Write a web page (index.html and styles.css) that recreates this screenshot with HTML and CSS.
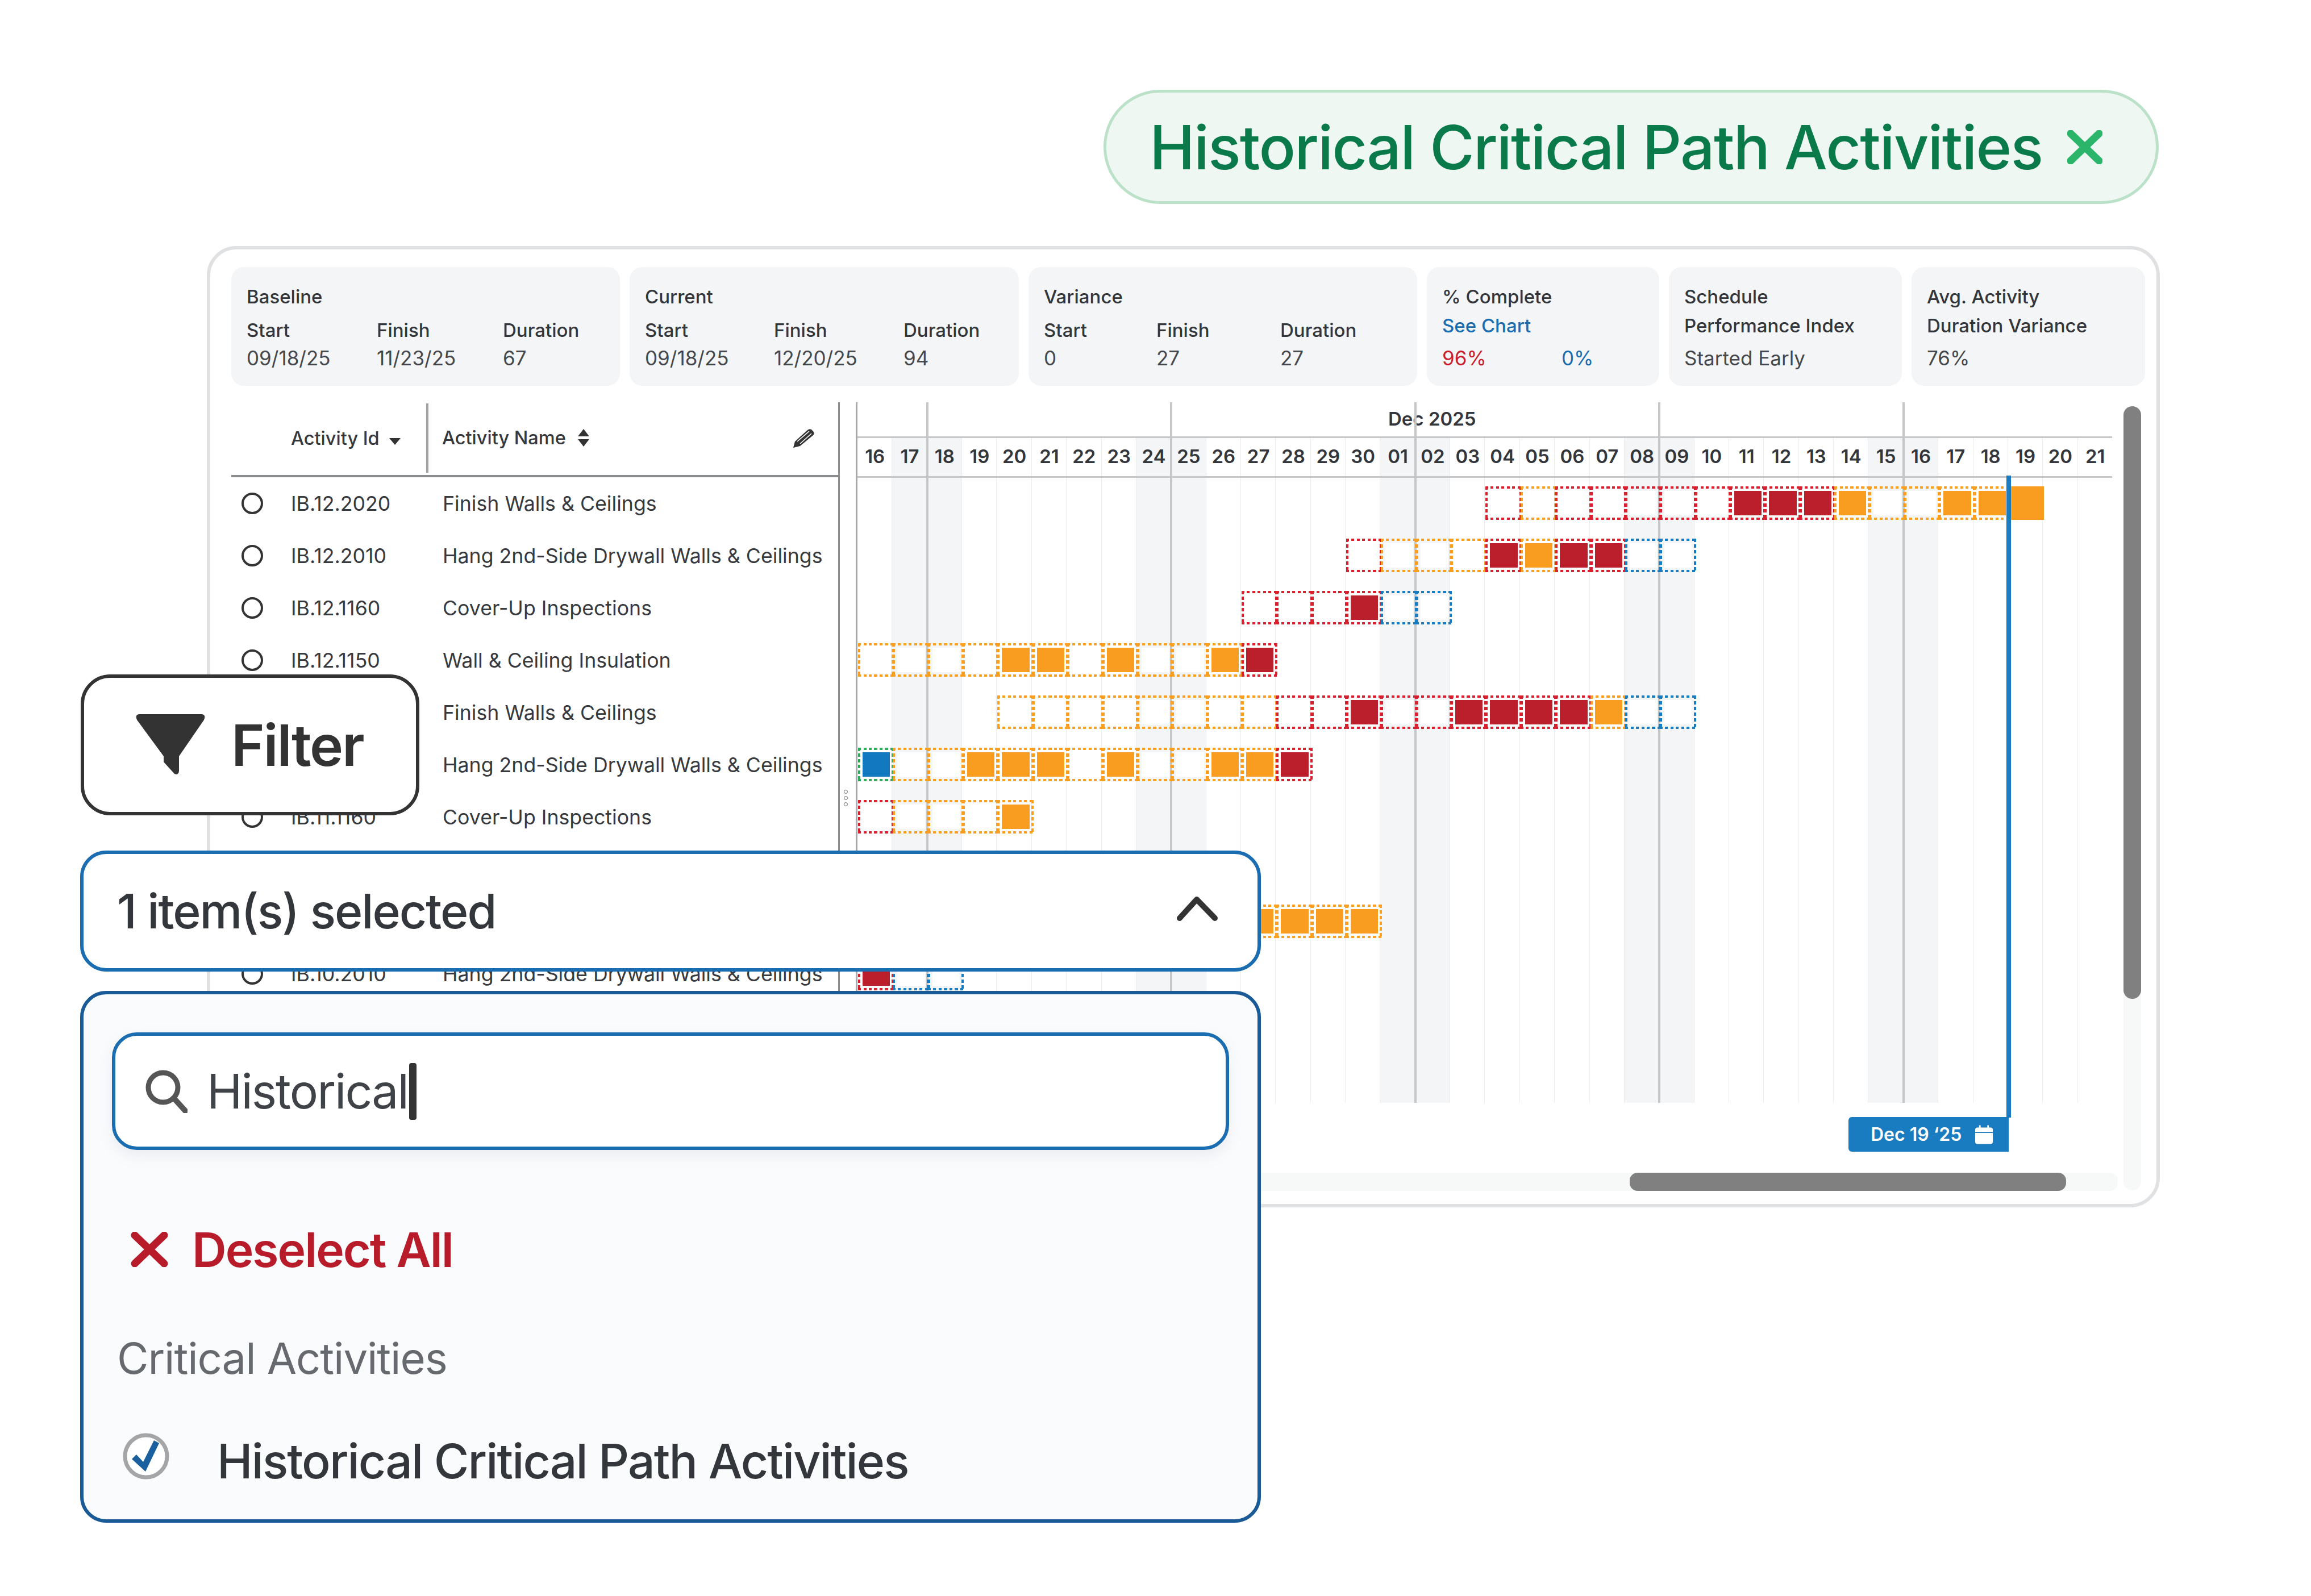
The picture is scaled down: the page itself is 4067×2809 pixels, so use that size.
FILE: index.html
```html
<!DOCTYPE html>
<html lang="en">
<head>
<meta charset="utf-8">
<title>Historical Critical Path Activities</title>
<link rel="stylesheet" href="styles.css">
</head>
<body>
<div class="canvas">
  <div class="pill">
    <span>Historical Critical Path Activities</span>
    <svg class="pill-x" viewBox="0 0 62 60"><path d="M6 6 56 54M56 6 6 54" fill="none" stroke="#2bb56b" stroke-width="13" stroke-linecap="round"/></svg>
  </div>

  <section class="card">
    <div class="summary">
      <div class="box">
        <div class="title">Baseline</div>
        <div class="triple t-a"><b>Start</b><b>Finish</b><b>Duration</b><span>09/18/25</span><span>11/23/25</span><span>67</span></div>
      </div>
      <div class="box">
        <div class="title">Current</div>
        <div class="triple t-b"><b>Start</b><b>Finish</b><b>Duration</b><span>09/18/25</span><span>12/20/25</span><span>94</span></div>
      </div>
      <div class="box">
        <div class="title">Variance</div>
        <div class="triple t-c"><b>Start</b><b>Finish</b><b>Duration</b><span>0</span><span>27</span><span>27</span></div>
      </div>
      <div class="box">
        <div class="title">% Complete</div>
        <div class="second link">See Chart</div>
        <div class="value pair"><span class="red">96%</span><span class="blue">0%</span></div>
      </div>
      <div class="box">
        <div class="title">Schedule</div>
        <div class="second">Performance Index</div>
        <div class="value">Started Early</div>
      </div>
      <div class="box">
        <div class="title">Avg. Activity</div>
        <div class="second">Duration Variance</div>
        <div class="value">76%</div>
      </div>
    </div>

    <div class="main">
      <div class="table">
        <div class="thead">
          <div class="th-id">Activity Id <svg class="caret" viewBox="0 0 22 14"><path d="M1 1H21L11 13Z" fill="#333"/></svg></div>
          <div class="th-name">Activity Name
            <svg class="sort" viewBox="0 0 22 32"><path d="M11 0 21 13H1ZM1 18H21L11 31Z" fill="#333"/></svg>
            <svg class="pencil" viewBox="0 0 37 34"><path d="M0 34 3 23 25 3Q28 0 32 2L35 5Q38 9 35 12L12 31Z" fill="#333"/><path d="M7 23 28 5M12 27 32 9" stroke="#fff" stroke-width="1.6"/></svg>
          </div>
        </div>
        <div class="tr"><i class="radio"></i><span class="id">IB.12.2020</span><span>Finish Walls &amp; Ceilings</span></div>
        <div class="tr"><i class="radio"></i><span class="id">IB.12.2010</span><span>Hang 2nd-Side Drywall Walls &amp; Ceilings</span></div>
        <div class="tr"><i class="radio"></i><span class="id">IB.12.1160</span><span>Cover-Up Inspections</span></div>
        <div class="tr"><i class="radio"></i><span class="id">IB.12.1150</span><span>Wall &amp; Ceiling Insulation</span></div>
        <div class="tr"><i class="radio"></i><span class="id">IB.11.2020</span><span>Finish Walls &amp; Ceilings</span></div>
        <div class="tr"><i class="radio"></i><span class="id">IB.11.2010</span><span>Hang 2nd-Side Drywall Walls &amp; Ceilings</span></div>
        <div class="tr"><i class="radio"></i><span class="id">IB.11.1160</span><span>Cover-Up Inspections</span></div>
        <div class="tr"><i class="radio"></i><span class="id">IB.11.1150</span><span>Wall &amp; Ceiling Insulation</span></div>
        <div class="tr"><i class="radio"></i><span class="id">IB.10.2020</span><span>Finish Walls &amp; Ceilings</span></div>
        <div class="tr"><i class="radio"></i><span class="id">IB.10.2010</span><span>Hang 2nd-Side Drywall Walls &amp; Ceilings</span></div>
      </div>
      <div class="sash"><i></i><i></i><i></i></div>

      <div class="gantt">
        <div class="month"><span>Dec 2025</span></div>
        <div class="area">
          <div class="days">
            <span>16</span><span>17</span><span>18</span><span>19</span><span>20</span><span>21</span><span>22</span><span>23</span><span>24</span><span>25</span><span>26</span><span>27</span><span>28</span><span>29</span><span>30</span><span>01</span><span>02</span><span>03</span><span>04</span><span>05</span><span>06</span><span>07</span><span>08</span><span>09</span><span>10</span><span>11</span><span>12</span><span>13</span><span>14</span><span>15</span><span>16</span><span>17</span><span>18</span><span>19</span><span>20</span><span>21</span>
          </div>
          <div class="bars" style="--s:18"><i class="c r"></i><i class="c o"></i><i class="c r"></i><i class="c r"></i><i class="c r"></i><i class="c r"></i><i class="c r"></i><i class="c r f"></i><i class="c r f"></i><i class="c r f"></i><i class="c o f"></i><i class="c o"></i><i class="c o"></i><i class="c o f"></i><i class="c o f"></i><i class="c solid"></i></div>
          <div class="bars" style="--s:14"><i class="c r"></i><i class="c o"></i><i class="c o"></i><i class="c o"></i><i class="c r f"></i><i class="c o f"></i><i class="c r f"></i><i class="c r f"></i><i class="c b"></i><i class="c b"></i></div>
          <div class="bars" style="--s:11"><i class="c r"></i><i class="c r"></i><i class="c r"></i><i class="c r f"></i><i class="c b"></i><i class="c b"></i></div>
          <div class="bars" style="--s:0"><i class="c o"></i><i class="c o"></i><i class="c o"></i><i class="c o"></i><i class="c o f"></i><i class="c o f"></i><i class="c o"></i><i class="c o f"></i><i class="c o"></i><i class="c o"></i><i class="c o f"></i><i class="c r f"></i></div>
          <div class="bars" style="--s:4"><i class="c o"></i><i class="c o"></i><i class="c o"></i><i class="c o"></i><i class="c o"></i><i class="c o"></i><i class="c o"></i><i class="c o"></i><i class="c r"></i><i class="c r"></i><i class="c r f"></i><i class="c r"></i><i class="c r"></i><i class="c r f"></i><i class="c r f"></i><i class="c r f"></i><i class="c r f"></i><i class="c o f"></i><i class="c b"></i><i class="c b"></i></div>
          <div class="bars" style="--s:0"><i class="c g f"></i><i class="c o"></i><i class="c o"></i><i class="c o f"></i><i class="c o f"></i><i class="c o f"></i><i class="c o"></i><i class="c o f"></i><i class="c o"></i><i class="c o"></i><i class="c o f"></i><i class="c o f"></i><i class="c r f"></i></div>
          <div class="bars" style="--s:0"><i class="c r"></i><i class="c o"></i><i class="c o"></i><i class="c o"></i><i class="c o f"></i></div>
          <div class="bars" style="--s:0"></div>
          <div class="bars" style="--s:8"><i class="c o f"></i><i class="c o f"></i><i class="c o f"></i><i class="c o f"></i><i class="c o f"></i><i class="c o f"></i><i class="c o f"></i></div>
          <div class="bars" style="--s:0"><i class="c r f"></i><i class="c b"></i><i class="c b"></i></div>
        </div>
        <div class="today"></div>
        <div class="badge">Dec 19 ‘25
          <svg class="cal" viewBox="0 0 32 34"><path d="M7 0h3v6H7zM22 0h3v6h-3z" fill="#fff"/><path d="M4 4H28Q32 4 32 8V12H0V8Q0 4 4 4ZM0 14H32V30Q32 34 28 34H4Q0 34 0 30Z" fill="#fff"/></svg>
        </div>
      </div>
    </div>

    <div class="vscroll"><i></i></div>
    <div class="hscroll"><i></i></div>
  </section>

  <div class="filter">
    <svg class="funnel" viewBox="0 0 122 108"><path d="M6 0H116Q124 1 120 10L76 74V100Q75 108 68 105L49 84V74L2 10Q-2 1 6 0Z" fill="#333"/></svg>
    <span>Filter</span>
  </div>

  <div class="select">
    <span>1 item(s) selected</span>
    <svg class="chev" viewBox="0 0 72 44"><path d="M5 39 35 6 67 39" fill="none" stroke="#333" stroke-width="10" stroke-linecap="round" stroke-linejoin="round"/></svg>
  </div>

  <div class="panel">
    <div class="search">
      <svg class="lens" viewBox="0 0 74 76"><circle cx="31" cy="31" r="26" fill="none" stroke="#555" stroke-width="9"/><path d="M50 50 70 72" stroke="#555" stroke-width="10" stroke-linecap="round"/></svg>
      <span>Historical</span><i class="cursor"></i>
    </div>
    <div class="deselect">
      <svg class="redx" viewBox="0 0 66 62"><path d="M7 6 59 56M59 6 7 56" fill="none" stroke="#b81c2b" stroke-width="13" stroke-linecap="round"/></svg>
      <span>Deselect All</span>
    </div>
    <div class="group">Critical Activities</div>
    <div class="option">
      <svg class="check" viewBox="0 0 84 84"><circle cx="42" cy="42" r="37" fill="#fff" stroke="#a3a5a7" stroke-width="7"/><path d="M17 47 25 39 37 52 56 14 65 19 41 69Z" fill="#1a5f9e"/></svg>
      <span>Historical Critical Path Activities</span>
    </div>
  </div>
</div>
</body>
</html>
```

FILE: styles.css
```css
* { box-sizing: border-box; }
html, body { margin: 0; padding: 0; background: #fff; }
body { font-family: Inter, "Noto Sans", sans-serif; color: #33363b; }
i { display: block; font-style: normal; }
.canvas { position: relative; width: 4067px; height: 2809px; overflow: hidden; background: #fff; }

/* pill */
.pill {
  position: absolute; left: 1942px; top: 158px; width: 1857px; height: 201px;
  display: flex; align-items: center; padding-left: 76px;
  background: #eef7f1; border: 5px solid #bbe1c8; border-radius: 100px;
  color: #0a7a4b; font-size: 107px; font-weight: 500; letter-spacing: -1.8px; white-space: nowrap;
}
.pill-x { width: 62px; height: 60px; margin-left: 44px; flex: none; }

/* card */
.card {
  position: absolute; left: 364px; top: 433px; width: 3437px; height: 1692px;
  background: #fff; border: 6px solid #e0e1e3; border-radius: 52px;
  padding: 31px 0 0 37px; font-size: 33px;
}
.summary { display: grid; grid-template-columns: 684px 685px 684px 409px 410px 411px; column-gap: 17px; }
.box { height: 209px; background: #f4f5f6; border-radius: 22px; padding: 30px 27px 0; line-height: 44px; color: #33363b; font-weight: 500; }
.title { height: 44px; }
.triple { display: grid; grid-template-rows: 44px 48px; margin-top: 15px; }
.triple b { font-weight: 500; }
.triple span { font-weight: 400; font-size: 35px; color: #45484d; padding-top: 5px; }
.t-a { grid-template-columns: 229px 222px 1fr; }
.t-b { grid-template-columns: 227px 228px 1fr; }
.t-c { grid-template-columns: 198px 218px 1fr; }
.second { height: 44px; margin-top: 7px; }
.link { color: #1a6db0; }
.value { margin-top: 13px; font-size: 35px; font-weight: 400; color: #45484d; }
.pair { display: grid; grid-template-columns: 210px 1fr; }
.red { color: #c9202e; }
.blue { color: #1a6db0; }

.main { position: relative; display: flex; height: 1233px; margin-top: 29px; }

/* table */
.table { width: 1071px; flex: none; border-right: 3px solid #8d8e90; overflow: hidden; color: #36393e; }
.thead { display: flex; height: 132px; border-bottom: 4px solid #8a8b8d; font-weight: 500; font-size: 32.5px; }
.th-id { width: 347px; height: 122px; margin-top: 2px; padding-left: 105px; display: flex; align-items: center; border-right: 4px solid #a2a3a5; }
.caret { width: 22px; height: 14px; margin: 12px 0 0 16px; }
.th-name { flex: 1; display: flex; align-items: center; padding: 0 42px 3px 24px; }
.sort { width: 22px; height: 32px; margin-left: 20px; }
.pencil { width: 37px; height: 34px; margin-left: auto; }
.tr { display: flex; align-items: center; height: 92px; white-space: nowrap; font-size: 35.7px; }
.id { width: 267px; flex: none; }
.radio { width: 38px; height: 38px; margin: 0 49px 0 18px; flex: none; border: 4px solid #333; border-radius: 50%; }
.sash { position: absolute; left: 1078px; top: 682px; width: 8px; }
.sash i { width: 7px; height: 7px; margin-bottom: 4px; border: 1.5px solid #666; border-radius: 50%; }

/* gantt */
.gantt {
  --d: 61.36px;
  position: relative; width: 2211px; margin-left: 28px; flex: none;
  border-left: 3px solid #a8a9ab;
}
.month {
  position: relative; height: 60px; padding-left: 934px;
  display: flex; align-items: center; padding-bottom: 2px; font-weight: 600; font-size: 33px;
}
.month::after {
  content: ""; position: absolute; inset: 0;
  background: repeating-linear-gradient(90deg, transparent 0 calc(2 * var(--d) - 2px), #c6c7c8 calc(2 * var(--d) - 2px) calc(2 * var(--d) + 2px), transparent calc(2 * var(--d) + 2px) calc(7 * var(--d)));
}
.area {
  height: 1173px;
  background:
    repeating-linear-gradient(90deg, transparent 0 calc(2 * var(--d) - 2px), #c6c7c8 calc(2 * var(--d) - 2px) calc(2 * var(--d) + 2px), transparent calc(2 * var(--d) + 2px) calc(7 * var(--d))),
    repeating-linear-gradient(90deg, transparent 0 calc(var(--d) - 1px), #ececed calc(var(--d) - 1px) var(--d)),
    repeating-linear-gradient(90deg, transparent 0 var(--d), #f4f5f6 var(--d) calc(3 * var(--d)), transparent calc(3 * var(--d)) calc(7 * var(--d)));
}
.days {
  display: grid; grid-template-columns: repeat(36, var(--d)); height: 73px;
  border-top: 3px solid #c6c7c8; border-bottom: 3px solid #c6c7c8; padding-bottom: 3px;
  font-weight: 600; font-size: 33px; color: #33363b;
}
.days span { display: flex; align-items: center; justify-content: center; }
.bars {
  display: grid; grid-auto-rows: 59px; grid-template-columns: repeat(auto-fill, var(--d));
  align-items: start; height: 92px; padding: 15px 0 0 calc(var(--s) * var(--d));
}
.c {
  --k: #d9202e; --f: #bb1f2b;
  position: relative; height: 59px; margin: 0 -3px 0 1px;
  background:
    repeating-linear-gradient(90deg, var(--k) 0 5px, transparent 5px 9.5px) top / 100% 4px no-repeat,
    repeating-linear-gradient(90deg, var(--k) 0 5px, transparent 5px 9.5px) bottom / 100% 4px no-repeat,
    repeating-linear-gradient(180deg, var(--k) 0 6px, transparent 6px 10px) left / 4px 100% no-repeat,
    repeating-linear-gradient(180deg, var(--k) 0 6px, transparent 6px 10px) right / 4px 100% no-repeat;
}
.c::before { content: ""; position: absolute; inset: 8px 7px 8px 8px; background: #fff; }
.c.f::before { background: var(--f); }
.o { --k: #fa9f22; --f: #f99d20; }
.b { --k: #1a7cc0; --f: #1278bf; }
.g { --k: #2eaa5a; --f: #1278bf; }
.c.solid { background: #f99d20; margin: 0 -2px 0 3px; }
.c.solid::before { display: none; }

.today { position: absolute; left: 2022px; top: 129px; width: 8px; height: 1130px; background: #1a7cc0; }
.badge {
  position: absolute; left: 1744px; top: 1258px; width: 282px; height: 61px;
  display: flex; align-items: center; padding-left: 39px;
  background: #1a7cc0; border-radius: 6px 0 0 6px;
  color: #fff; font-size: 32px; font-weight: 600; white-space: nowrap;
}
.cal { width: 31px; height: 34px; margin-left: auto; margin-right: 28px; }

/* scrollbars */
.vscroll { position: absolute; left: 3367px; top: 276px; width: 31px; height: 1380px; background: #f7f8f8; border-radius: 16px; }
.vscroll i { height: 1043px; background: #808080; border-radius: 16px; }
.hscroll { position: absolute; left: 140px; top: 1625px; width: 3217px; height: 32px; background: #f7f8f8; border-radius: 14px; }
.hscroll i { position: absolute; left: 2358px; top: 0; width: 768px; height: 32px; background: #808080; border-radius: 14px; }

/* filter */
.filter {
  position: absolute; left: 142px; top: 1187px; width: 596px; height: 248px;
  display: flex; align-items: center; padding-left: 91px;
  background: #fff; border: 6px solid #333; border-radius: 52px;
  font-size: 100px; font-weight: 600; letter-spacing: -2.2px; color: #333;
}
.funnel { width: 122px; height: 108px; flex: none; margin-right: 46px; }

/* select */
.select {
  position: absolute; left: 141px; top: 1497px; width: 2078px; height: 213px;
  display: flex; align-items: center; justify-content: space-between; padding: 0 70px 0 59px;
  background: #fff; border: 6px solid #1a6db0; border-radius: 46px;
  font-size: 84px; font-weight: 500; letter-spacing: -2px; color: #33363b;
}
.chev { width: 72px; height: 44px; margin-bottom: 10px; }

/* panel */
.panel {
  position: absolute; left: 141px; top: 1744px; width: 2078px; height: 936px;
  background: #fafbfd; border: 6px solid #1a5a96; border-radius: 46px;
  padding: 67px 50px 0;
}
.search {
  display: flex; align-items: center; height: 207px; padding-left: 53px;
  background: #fff; border: 6px solid #1a6db0; border-radius: 44px;
  box-shadow: 0 10px 24px rgba(120, 130, 150, 0.12);
  font-size: 84px; letter-spacing: -2px; color: #3f4247;
}
.lens { width: 74px; height: 76px; flex: none; margin-right: 34px; }
.cursor { width: 13px; height: 100px; margin-left: 2px; background: #333; border-radius: 4px; }
.deselect { display: flex; align-items: center; height: 70px; margin: 140px 0 0 33px; color: #b81c2b; font-size: 84px; font-weight: 600; letter-spacing: -2px; }
.redx { width: 66px; height: 62px; flex: none; margin-right: 42px; }
.group { margin: 111px 0 0 9px; font-size: 76px; letter-spacing: -1.1px; line-height: 90px; color: #666a6e; }
.option { display: flex; align-items: center; margin: 68px 0 0 18px; font-size: 84px; font-weight: 500; letter-spacing: -1.9px; color: #33363b; white-space: nowrap; }
.option span { padding-top: 18px; }
.check { width: 84px; height: 84px; flex: none; margin-right: 83px; }
```
